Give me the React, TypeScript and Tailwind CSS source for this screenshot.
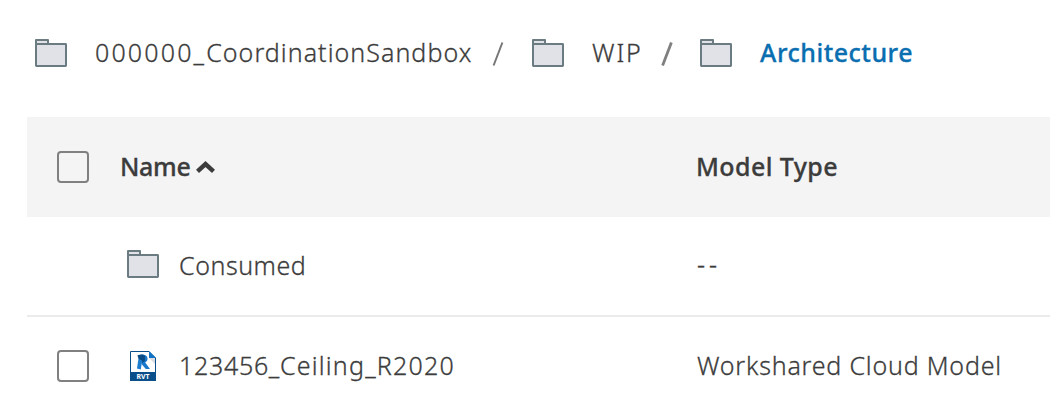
import React from "react";

function Folder({ className = "" }: { className?: string }) {
  return (
    <svg className={"h-7 w-8 shrink-0 " + className} viewBox="0 0 32 28" fill="#e0e2e8" stroke="#6b7b82" strokeWidth="2" strokeLinejoin="round">
      <path d="M1 5V1h12v4" />
      <rect x="1" y="5" width="30" height="22" rx="0.4" />
    </svg>
  );
}

function RvtFile() {
  return (
    <svg className="h-[30px] w-[26px] shrink-0 [-webkit-text-stroke:0px]" viewBox="0 0 26 30">
      <path d="M0.5 0.5H19L25.5 7V29.5H0.5Z" fill="#fff" stroke="#0b4f8a" />
      <path d="M19 7L25 13V7Z" fill="#d9dce0" />
      <path d="M19 0L26 7H19Z" fill="#1273c4" />
      <path d="M8.5 4.5Q14 2 17 5.5Q18.8 9.3 15.2 11.5L20 18H15.8L11.5 13V8Z" fill="#1878ca" />
      <path d="M7.5 4.3Q13 2.5 15 5V9.5L12 12L8.5 8Z" fill="#0a4c86" />
      <path d="M8.4 8L12.2 9.5L10.8 18.5L7 17.5Z" fill="#1d7dce" />
      <rect y="21" width="26" height="9" fill="#0b4f8a" />
      <text x="6.5" y="28.3" fill="#fff" fontSize="7" fontWeight="700" fontFamily="Noto Sans, sans-serif" textLength="13" lengthAdjust="spacingAndGlyphs">RVT</text>
    </svg>
  );
}

function Checkbox() {
  return <span role="checkbox" aria-checked="false" className="block size-8 shrink-0 rounded-[4px] border-2 border-[#808080]" />;
}

function Slash({ className }: { className: string }) {
  return (
    <svg className={"h-6 w-3 shrink-0 " + className} viewBox="0 0 12 24" fill="none" stroke="currentColor">
      <path d="M1.6 23.5L10.4 0.5" />
    </svg>
  );
}

export default function App() {
  return (
    <main className="flex h-[408px] w-[1050px] flex-col overflow-hidden bg-white font-['Noto_Sans',sans-serif] text-[25px] leading-8 font-light whitespace-nowrap text-[#3c3c3c] [-webkit-text-stroke:0.3px]">
      <nav className="flex h-[117px] shrink-0 items-start pt-9 pl-[35px]">
        <Folder className="mt-[3px]" />
        <span className="ml-7 w-[397px] tracking-[1.05px]"><span className="tracking-[2.15px]">000000_</span>CoordinationSandbox</span>
        <Slash className="mt-[6px] stroke-[2] text-[#777]" />
        <Folder className="mt-[3px] ml-7" />
        <span className="ml-7 w-[69px] tracking-[1.9px]">WIP</span>
        <Slash className="mt-[6px] stroke-[2.8] text-[#808080]" />
        <Folder className="mt-[3px] ml-[27px]" />
        <span className="ml-7 font-[550] tracking-[0.5px] text-[#0a6eb0]">Architecture</span>
      </nav>
      <section className="ml-[27px] shrink-0">
        <div className="flex h-[100px] items-center bg-[#f4f4f4] pl-[30px] font-[550]">
          <Checkbox />
          <div className="ml-[31px] flex w-[577px] items-center">
            <span className="w-[76px] pb-0.5 tracking-[-0.3px]">Name</span>
            <svg className="h-3 w-[19px]" viewBox="0 0 19 12" fill="none" stroke="#3c3c3c" strokeWidth="4.4">
              <path d="M1.5 10.3L9.5 3L17.5 10.3" />
            </svg>
          </div>
          <span className="-ml-px pb-0.5 tracking-[0.4px]">Model Type</span>
        </div>
        <div className="flex h-[100px] items-center border-b-2 border-[#ebebeb] pl-[100px]">
          <Folder className="-mt-1" />
          <span className="ml-5 w-[518px] pb-0.5 tracking-[0.55px]">Consumed</span>
          <span className="pb-1 tracking-[4px]">--</span>
        </div>
        <div className="flex h-[98px] items-center pl-[30px]">
          <Checkbox />
          <div className="ml-[41px] flex w-[567px] items-center">
            <RvtFile />
            <span className="ml-[23px] pb-0.5 tracking-[1.2px]"><span className="tracking-[0.7px]">123456_</span>Ceiling_R2020</span>
          </div>
          <span className="pb-0.5 tracking-[0.8px]">Workshared Cloud Model</span>
        </div>
      </section>
    </main>
  );
}
